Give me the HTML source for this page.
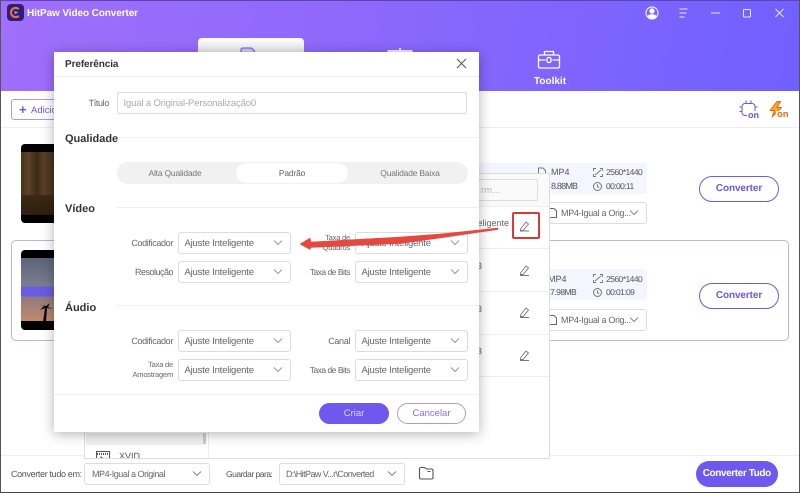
<!DOCTYPE html>
<html><head><meta charset="utf-8"><style>
*{box-sizing:border-box}
html,body{margin:0;padding:0}
body{width:800px;height:493px;position:relative;overflow:hidden;background:#fff;font-family:"Liberation Sans","Noto Sans CJK SC",sans-serif;color:#555;font-size:10px;text-rendering:geometricPrecision}
.a{position:absolute;white-space:nowrap}
.sel{position:absolute;width:113px;height:22px;border:1px solid #dcdcdc;border-radius:3px;background:#fff;padding-left:5.5px;line-height:22px;font-size:9.5px;color:#666;letter-spacing:-.2px;white-space:nowrap}
.sel svg,.sb svg{position:absolute;right:7px;top:6px}
.lab{position:absolute;text-align:right;font-size:9px;letter-spacing:-.35px;color:#666;white-space:nowrap;line-height:12px}
.h{position:absolute;left:65px;font-weight:bold;font-size:11px;color:#333;line-height:14px}
.line{position:absolute;height:1px;background:#eee}
.sb{position:absolute;border:1px solid #ddd;border-radius:3px;background:#fff;color:#666;line-height:21px;font-size:9px;white-space:nowrap}
.btn{position:absolute;width:80px;height:26px;border:1.5px solid #6f5ce0;border-radius:13px;text-align:center;line-height:24px;font-weight:bold;color:#6a5ae0;font-size:10px;background:#fff;letter-spacing:-.1px}
.info{position:absolute;left:479px;width:168px;height:31px;background:#f4f5fe;border-radius:0 3px 3px 0}
.t{position:absolute;white-space:nowrap;font-size:8.5px;color:#555;line-height:11px}
</style></head><body>
<!-- header -->
<div class="a" style="left:0;top:0;width:800px;height:91px;background:linear-gradient(100deg,#a06ffb 0%,#8f69fb 40%,#7060ff 100%)"></div>
<div class="a" style="left:7px;top:4px;width:17px;height:17px;border-radius:4px;background:#2e1f75"></div>
<svg class="a" style="left:7px;top:4px" width="17" height="17"><path d="M11.800 5.200A4.600 4.600 0 1 0 11.800 11.800" fill="none" stroke="#f0762f" stroke-width="2"/><path d="M7.500 6.500l4 2-4 2z" fill="#8f7bff"/></svg>
<div class="a" style="left:27px;top:7px;font-size:10px;font-weight:bold;color:#fff;letter-spacing:-.1px;line-height:13px">HitPaw Video Converter</div>
<svg class="a" style="left:640px;top:0" width="160" height="26" fill="none" stroke="#fff" stroke-opacity=".85"><circle cx="12" cy="13" r="6" stroke-width="1.200"/><circle cx="12" cy="11" r="2.200" fill="#fff"/><path d="M7.500 16.500c2-2.500 7-2.500 9 0a6 6 0 0 1-9 0z" fill="#fff"/><path d="M39.500 9h8M39.500 13h7M39.500 17h5M71 13h9" stroke-width="1"/><rect x="103.500" y="9.500" width="7" height="7.500" rx="1"/><path d="M135.500 9l8 8M143.500 9l-8 8"/></svg>
<div class="a" style="left:198px;top:38px;width:106px;height:20px;background:linear-gradient(#fff,#ddd);border-radius:4px 4px 0 0"></div>
<svg class="a" style="left:240px;top:47px" width="18" height="6"><path d="M1 5V2a1.500 1.500 0 0 1 1.500-1h9l3 3v1" fill="#cfc8f5" stroke="#6a5ae0"/></svg>
<div class="a" style="left:387px;top:50px;width:26px;height:3px;background:#f1ecff;border-radius:2px 2px 0 0"></div>
<div class="a" style="left:399px;top:48px;width:2px;height:3px;background:#f1ecff"></div>
<svg class="a" style="left:536px;top:48px" width="26" height="22" fill="none" stroke="#fff" stroke-width="1.300"><path d="M2.500 8.500a1.500 1.500 0 0 1 1.500-1.500h18a1.500 1.500 0 0 1 1.500 1.500v10a1.500 1.500 0 0 1-1.500 1.500h-18a1.500 1.500 0 0 1-1.500-1.500zM8.500 7V3.500h9V7M2.500 12h7M16.500 12h7"/><rect x="11" y="9.500" width="4" height="5" rx="1.500"/></svg>
<div class="a" style="left:534px;top:75px;font-size:10px;font-weight:bold;color:#fff;line-height:13px">Toolkit</div>
<!-- toolbar -->
<div class="a" style="left:0;top:127px;width:800px;height:1px;background:#eee"></div>
<div class="a" style="left:11px;top:99px;width:60px;height:21px;border:1px solid #a899ee;border-radius:3px"></div>
<div class="a" style="left:19px;top:102px;color:#6a5ae0;font-weight:bold;font-size:13px;line-height:15px">+</div>
<div class="a" style="left:31px;top:104px;color:#6a5ae0;font-size:9.500px;line-height:13px">Adicionar</div>
<svg class="a" style="left:738px;top:99px" width="54" height="22" fill="none"><rect x="4" y="4.500" width="13" height="12" rx="3" stroke="#6a5ae0"/><path d="M8 1.500v3M13 1.500v3M1.500 8h2.500M1.500 12.500h2.500M17 8h2.500" stroke="#6a5ae0"/><path d="M39 2.500l-7 9h4.500l-2.500 6.500 9.500-9.500h-4.500l3.500-6z" fill="#ffa726" stroke="#ea5f0c" stroke-width=".9" stroke-linejoin="round"/></svg>
<div class="a" style="left:747px;top:111px;font-size:9px;font-weight:bold;color:#5f54d8;background:#fff;line-height:8px;padding:0 1px">on</div>
<div class="a" style="left:776px;top:111px;font-size:9.500px;font-weight:bold;color:#ef6a10;background:#fff;line-height:8px;padding:0 1px">on</div>
<!-- item 1 -->
<div class="a" style="left:21px;top:144px;width:40px;height:79px;background:#000;border-radius:4px"></div>
<div class="a" style="left:21px;top:152px;width:40px;height:63px;background:linear-gradient(90deg,#4a331c,#5d4228 20%,#3c2916 40%,#5a4026 55%,#3a2814)"></div>
<div class="a" style="left:21px;top:195px;width:40px;height:20px;background:linear-gradient(#3d2a15,#2e1f0f)"></div>
<div class="info" style="top:163px"></div>
<svg class="a" style="left:537px;top:167px" width="10" height="11" fill="none" stroke="#777"><path d="M1.500 1h4.500l2.500 2.500V10h-7z"/></svg>
<div class="t" style="left:551px;top:167px;font-size:9px">MP4</div>
<div class="t" style="left:551px;top:181px;font-size:9px;letter-spacing:-.8px">8.88MB</div>
<svg class="a" style="left:592px;top:167px" width="12" height="11" fill="none" stroke="#777"><path d="M1.500 4V1.500H4M8 1.500h2.500V4M10.500 7v2.500H8M4 9.500H1.500V7M3 8l6-5" stroke-width=".9"/></svg>
<svg class="a" style="left:592px;top:181px" width="11" height="11" fill="none" stroke="#777"><circle cx="5.500" cy="5.500" r="4"/><path d="M5.500 3.200v2.500l1.500 1"/></svg>
<div class="t" style="left:606px;top:167px;letter-spacing:-.55px">2560*1440</div>
<div class="t" style="left:606px;top:181px;letter-spacing:-.6px">00:00:11</div>
<div class="btn" style="left:699px;top:176px">Converter</div>
<div class="sb" style="left:535px;top:202px;width:112px;height:22px;padding-left:25px;letter-spacing:-.3px">MP4-Igual a Orig...<svg width="10" height="8" fill="none" stroke="#888"><path d="M1 1.500l4 4 4-4"/></svg></div>
<svg class="a" style="left:548px;top:207px" width="10" height="12" fill="none" stroke="#666"><path d="M1.500 1.500h4.500l2.500 2.500v6.500h-7z"/></svg>
<!-- item 2 -->
<div class="a" style="left:11px;top:240px;width:778px;height:101px;border:1px solid #bcb2f2;border-radius:5px"></div>
<div class="a" style="left:21px;top:250px;width:40px;height:80px;background:#000;border-radius:4px"></div>
<div class="a" style="left:21px;top:258px;width:40px;height:63px;background:linear-gradient(#5e6278,#7c7f90 45%,#6a5ce0 45%,#6a5ce0 61%,#8e7a80 61%,#c08a6c 100%)"></div>
<svg class="a" style="left:21px;top:298px" width="40" height="24"><path d="M22 24l2-14-5 2 4-4-4-1 6 1 4-3-2 4 5 2-6-1-1 14zM34 24l1-9 3 9z" fill="#0a0a0a"/></svg>
<div class="info" style="top:269px"></div>
<div class="t" style="left:548px;top:274px;font-size:9px">MP4</div>
<div class="t" style="left:546px;top:287px;letter-spacing:-.55px">47.98MB</div>
<svg class="a" style="left:592px;top:273px" width="12" height="11" fill="none" stroke="#777"><path d="M1.500 4V1.500H4M8 1.500h2.500V4M10.500 7v2.500H8M4 9.500H1.500V7M3 8l6-5" stroke-width=".9"/></svg>
<svg class="a" style="left:592px;top:287px" width="11" height="11" fill="none" stroke="#777"><circle cx="5.500" cy="5.500" r="4"/><path d="M5.500 3.200v2.500l1.500 1"/></svg>
<div class="t" style="left:606px;top:274px;letter-spacing:-.55px">2560*1440</div>
<div class="t" style="left:606px;top:287px;letter-spacing:-.6px">00:01:09</div>
<div class="btn" style="left:699px;top:282.500px">Converter</div>
<div class="sb" style="left:535px;top:309px;width:112px;height:22px;padding-left:25px;letter-spacing:-.3px">MP4-Igual a Orig...<svg width="10" height="8" fill="none" stroke="#888"><path d="M1 1.500l4 4 4-4"/></svg></div>
<svg class="a" style="left:548px;top:314px" width="10" height="12" fill="none" stroke="#666"><path d="M1.500 1.500h4.500l2.500 2.500v6.500h-7z"/></svg>
<!-- bottom bar (under panel) -->
<div class="a" style="left:0;top:455px;width:800px;height:38px;background:#fff"></div>
<div class="a" style="left:0;top:455px;width:800px;height:1px;background:#eee"></div>
<!-- dropdown panel -->
<div class="a" style="left:84px;top:173px;width:466px;height:286px;background:#fff;border:1px solid #ddd;overflow:hidden">
  <div class="a" style="left:0;top:0;width:465px;height:32px;background:#fafafa"></div>
  <div class="a" style="left:1px;top:259px;width:118px;height:12px;background:#f0f0f0"></div>
  <div class="a" style="left:118px;top:259px;width:3px;height:11px;background:#ccc"></div>
  <svg class="a" style="left:11px;top:277px" width="15" height="10" fill="none" stroke="#555"><rect x=".500" y=".500" width="13" height="11"/><path d="M1 3h12" stroke-dasharray="1 1" stroke-width="2"/><path d="M5 6v4l3-2z"/></svg>
  <div class="a" style="left:34px;top:276px;color:#555;font-size:9px;line-height:12px">XVID</div>
</div>
<div class="a" style="left:440px;top:179px;width:98px;height:22px;border:1px solid #ddd;border-radius:2px;color:#bbb;padding-left:40px;line-height:22px;font-size:9.500px">rm...</div>
<div class="a" style="left:208px;top:206px;width:341px;height:1px;background:#eee"></div>
<div class="a" style="left:208px;top:248px;width:341px;height:1px;background:#eee"></div>
<div class="a" style="left:208px;top:291px;width:341px;height:1px;background:#eee"></div>
<div class="a" style="left:208px;top:334px;width:341px;height:1px;background:#eee"></div>
<div class="a" style="left:208px;top:376px;width:341px;height:1px;background:#eee"></div>
<div class="a" style="left:208px;top:173px;width:1px;height:285px;background:#eee"></div>
<div class="a" style="left:440px;top:217px;width:66px;text-align:right;font-size:9px;color:#666;line-height:13px">Ajuste Inteligente</div>
<div class="a" style="left:512px;top:212px;width:28px;height:27px;border:2px solid #d43c35;border-radius:2px"></div>
<svg class="a" style="left:519px;top:220px" width="12" height="12" fill="none" stroke="#777" stroke-width=".9"><path d="M1.500 9l5.500-7 2.500 2-5.500 6.500H1.500zM1 11h9"/></svg>
<svg class="a" style="left:519px;top:264px" width="12" height="13" fill="none" stroke="#777" stroke-width=".9"><path d="M1.500 9l5.500-7 2.500 2-5.500 6.500H1.500zM1 11.500h9"/></svg>
<svg class="a" style="left:519px;top:306px" width="12" height="13" fill="none" stroke="#777" stroke-width=".9"><path d="M1.500 9l5.500-7 2.500 2-5.500 6.500H1.500zM1 11.500h9"/></svg>
<svg class="a" style="left:519px;top:349px" width="12" height="13" fill="none" stroke="#777" stroke-width=".9"><path d="M1.500 9l5.500-7 2.500 2-5.500 6.500H1.500zM1 11.500h9"/></svg>
<div class="a" style="left:477px;top:260px;font-size:9px;color:#666;line-height:12px">3</div>
<div class="a" style="left:477px;top:303px;font-size:9px;color:#666;line-height:12px">3</div>
<div class="a" style="left:477px;top:345px;font-size:9px;color:#666;line-height:12px">3</div>
<!-- bottom bar content -->
<div class="a" style="left:11px;top:468px;font-size:9px;letter-spacing:-.35px;color:#555;line-height:13px">Converter tudo em:</div>
<div class="sb" style="left:84px;top:463px;width:126px;height:22px;padding-left:7px;letter-spacing:-.45px">MP4-Igual a Original<svg width="10" height="8" fill="none" stroke="#888"><path d="M1 1.500l4 4 4-4"/></svg></div>
<div class="a" style="left:226px;top:468px;font-size:8.500px;letter-spacing:-.5px;color:#555;line-height:13px">Guardar para:</div>
<div class="sb" style="left:279px;top:463px;width:126px;height:22px;padding-left:6px;letter-spacing:-.58px">D:\HitPaw V...r\Converted<svg width="10" height="8" fill="none" stroke="#888"><path d="M1 1.500l4 4 4-4"/></svg></div>
<svg class="a" style="left:418px;top:466px" width="17" height="15" fill="none" stroke="#555" stroke-width="1.100"><path d="M1.500 3a1.500 1.500 0 0 1 1.500-1.500h3.500L8.500 3h5A1.500 1.500 0 0 1 15 4.500v7a1.500 1.500 0 0 1-1.500 1.500H3a1.500 1.500 0 0 1-1.500-1.500zM9.500 5.500h3"/></svg>
<div class="a" style="left:695.500px;top:461px;width:82.500px;height:26px;background:#6e58ee;border-radius:13px;color:#fff;font-weight:bold;text-align:center;line-height:26px;font-size:10px;letter-spacing:-.4px">Converter Tudo</div>
<!-- window border -->
<div class="a" style="left:0;top:0;width:1px;height:493px;background:#555"></div>
<div class="a" style="left:799px;top:0;width:1px;height:493px;background:#555"></div>
<div class="a" style="left:0;top:492px;width:800px;height:1px;background:#444"></div>
<div class="a" style="left:0;top:0;width:800px;height:1px;background:#5a44b0"></div>
<!-- dialog -->
<div class="a" style="left:54px;top:52px;width:425px;height:380px;background:#fff;box-shadow:0 2px 12px rgba(0,0,0,.3)"></div>
<div class="a" style="left:65px;top:58px;font-size:10px;font-weight:bold;color:#333;letter-spacing:-.1px;line-height:14px">Preferência</div>
<svg class="a" style="left:456px;top:58px" width="11" height="11" fill="none" stroke="#555"><path d="M1 1l9 9M10 1l-9 9"/></svg>
<div class="line" style="left:54px;top:76px;width:425px"></div>
<div class="lab" style="left:60px;top:97px;width:49px">Título</div>
<div class="a" style="left:117px;top:92px;width:350px;height:22px;border:1px solid #dcdcdc;border-radius:2px;color:#aaa;padding-left:5.500px;line-height:21px;font-size:9.500px;letter-spacing:-.15px">Igual a Original-Personalização0</div>
<div class="h" style="top:132px">Qualidade</div>
<div class="line" style="left:119px;top:137px;width:360px"></div>
<div class="a" style="left:117px;top:162px;width:351px;height:22px;background:#f1f1f1;border-radius:11px"></div>
<div class="a" style="left:236px;top:163px;width:112px;height:20px;background:#fff;border-radius:10px"></div>
<div class="a" style="left:117px;top:167px;width:116px;text-align:center;font-size:8.500px;letter-spacing:-.2px;color:#777;line-height:12px">Alta Qualidade</div>
<div class="a" style="left:236px;top:167px;width:112px;text-align:center;font-size:8.500px;letter-spacing:-.2px;color:#666;line-height:12px">Padrão</div>
<div class="a" style="left:352px;top:167px;width:116px;text-align:center;font-size:8.500px;letter-spacing:-.2px;color:#777;line-height:12px">Qualidade Baixa</div>
<div class="h" style="top:202px">Vídeo</div>
<div class="line" style="left:117px;top:207px;width:362px"></div>
<div class="lab" style="left:110px;top:237px;width:63px">Codificador</div>
<div class="sel" style="left:178px;top:232px">Ajuste Inteligente<svg width="10" height="8" fill="none" stroke="#999"><path d="M1 1.500l4 4 4-4"/></svg></div>
<div class="lab" style="left:290px;top:233px;width:60px;font-size:7.500px;letter-spacing:-.2px;line-height:10px">Taxa de<br>Quadros</div>
<div class="sel" style="left:355px;top:232px">Ajuste Inteligente<svg width="10" height="8" fill="none" stroke="#999"><path d="M1 1.500l4 4 4-4"/></svg></div>
<div class="lab" style="left:110px;top:266px;width:63px;letter-spacing:-.5px">Resolução</div>
<div class="sel" style="left:178px;top:261px">Ajuste Inteligente<svg width="10" height="8" fill="none" stroke="#999"><path d="M1 1.500l4 4 4-4"/></svg></div>
<div class="lab" style="left:290px;top:266px;width:60px;font-size:8.500px;letter-spacing:-.5px">Taxa de Bits</div>
<div class="sel" style="left:355px;top:261px">Ajuste Inteligente<svg width="10" height="8" fill="none" stroke="#999"><path d="M1 1.500l4 4 4-4"/></svg></div>
<div class="h" style="top:301px">Áudio</div>
<div class="line" style="left:117px;top:305px;width:362px"></div>
<div class="lab" style="left:110px;top:335px;width:63px">Codificador</div>
<div class="sel" style="left:178px;top:330px">Ajuste Inteligente<svg width="10" height="8" fill="none" stroke="#999"><path d="M1 1.500l4 4 4-4"/></svg></div>
<div class="lab" style="left:290px;top:335px;width:60px">Canal</div>
<div class="sel" style="left:355px;top:330px">Ajuste Inteligente<svg width="10" height="8" fill="none" stroke="#999"><path d="M1 1.500l4 4 4-4"/></svg></div>
<div class="lab" style="left:110px;top:360px;width:63px;font-size:7.500px;letter-spacing:-.2px;line-height:10px">Taxa de<br>Amostragem</div>
<div class="sel" style="left:178px;top:359px">Ajuste Inteligente<svg width="10" height="8" fill="none" stroke="#999"><path d="M1 1.500l4 4 4-4"/></svg></div>
<div class="lab" style="left:290px;top:364px;width:60px;font-size:8.500px;letter-spacing:-.5px">Taxa de Bits</div>
<div class="sel" style="left:355px;top:359px">Ajuste Inteligente<svg width="10" height="8" fill="none" stroke="#999"><path d="M1 1.500l4 4 4-4"/></svg></div>
<div class="line" style="left:54px;top:394px;width:425px"></div>
<div class="a" style="left:319px;top:403px;width:70px;height:21px;background:#6e58ee;border-radius:11px;color:#ddd8ff;text-align:center;line-height:22px;font-size:9.500px">Criar</div>
<div class="a" style="left:397px;top:403px;width:69px;height:21px;border:1px solid #a899ee;border-radius:11px;color:#7f70e6;text-align:center;line-height:20px;font-size:9.500px">Cancelar</div>
<!-- arrow -->
<svg class="a" style="left:0;top:0" width="800" height="493"><path d="M300 244L310 238 311 242 400 237 440 234 498 228 498 229.500 440 238 400 243.500 311 247.500 310 249.500z" fill="#e5483e" stroke="#e5483e" stroke-width=".5" stroke-linejoin="round"/></svg>
</body></html>
